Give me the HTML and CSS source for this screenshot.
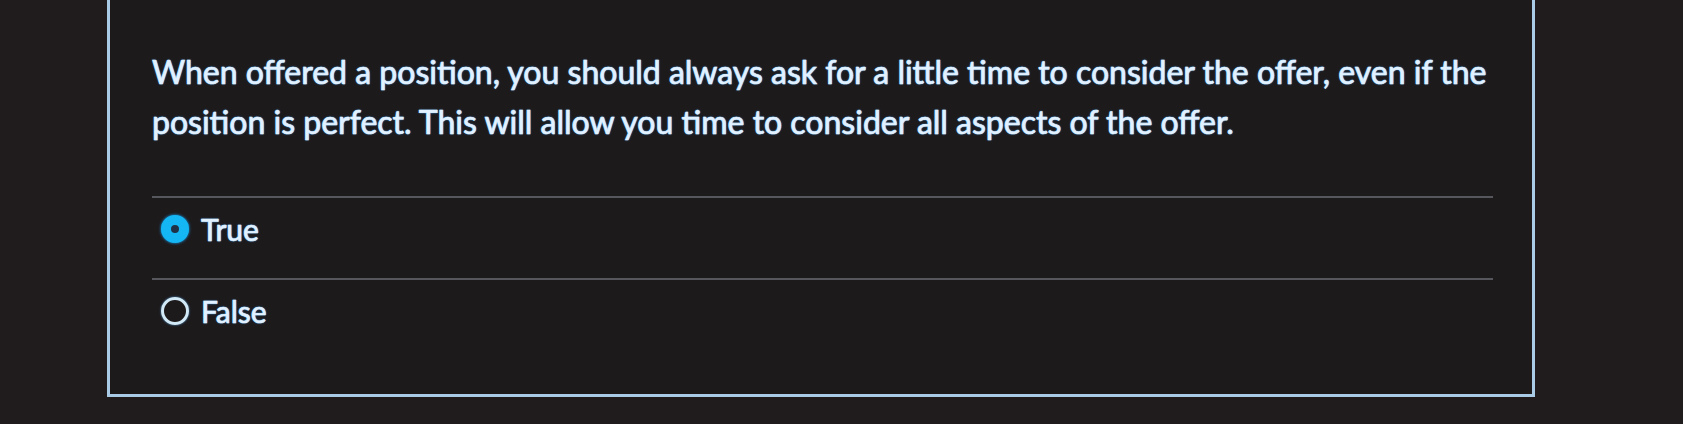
FILE: index.html
```html
<!DOCTYPE html>
<html lang="en">
<head>
<meta charset="utf-8">
<title>Quiz question</title>
<link rel="stylesheet" href="styles.css">
</head>
<body>
<div class="page">
  <div class="card">
    <p class="question">When offered a position, you should always ask for a little time to consider the offer, even if the position is perfect. This will allow you time to consider all aspects of the offer.</p>
    <div class="answers">
      <label class="answer">
        <span class="radio radio-checked"></span>
        <span class="answer-text">True</span>
      </label>
      <label class="answer">
        <span class="radio"></span>
        <span class="answer-text">False</span>
      </label>
    </div>
  </div>
</div>
</body>
</html>
```

FILE: styles.css
```css
html, body {
  margin: 0;
  padding: 0;
  background: #201c1e;
}

.page {
  width: 1683px;
  height: 424px;
  padding-left: 107px;
  box-sizing: border-box;
  overflow: hidden;
}

.card {
  width: 1428px;
  height: 397px;
  box-sizing: border-box;
  border: 3px solid #aacbe6;
  border-top: none;
  background: #1d1a1c;
  padding: 47px 39px 0 42px;
  font-family: Lato, "Noto Sans", sans-serif;
  color: #e2f1ff;
}

.question {
  margin: 0;
  font-size: 32px;
  font-weight: 400;
  line-height: 50px;
  -webkit-text-stroke: 0.6px #e2f1ff;
  text-shadow: 0 0 2px #2f8fe0, 0 0 1px #6fc0ff;
}

.answers {
  margin-top: 49px;
  display: flex;
  flex-direction: column;
}

.answer {
  display: flex;
  align-items: flex-start;
  gap: 12px;
  height: 82px;
  box-sizing: border-box;
  border-top: 2px solid #56575c;
  padding: 17px 0 0 9px;
}

.answer-text {
  font-size: 30px;
  font-weight: 400;
  line-height: 28px;
  -webkit-text-stroke: 0.6px #e2f1ff;
  text-shadow: 0 0 2px #2f8fe0, 0 0 1px #6fc0ff;
}

.radio {
  width: 28px;
  height: 28px;
  border-radius: 50%;
  box-sizing: border-box;
  border: 3px solid #d2e9f7;
  box-shadow: 0 0 2px #4aa8e8;
  flex: none;
}

.radio-checked {
  border: 10px solid #14b7f3;
  background: #1f3146;
  box-shadow: 0 0 3px #1aa8ff;
}
```
